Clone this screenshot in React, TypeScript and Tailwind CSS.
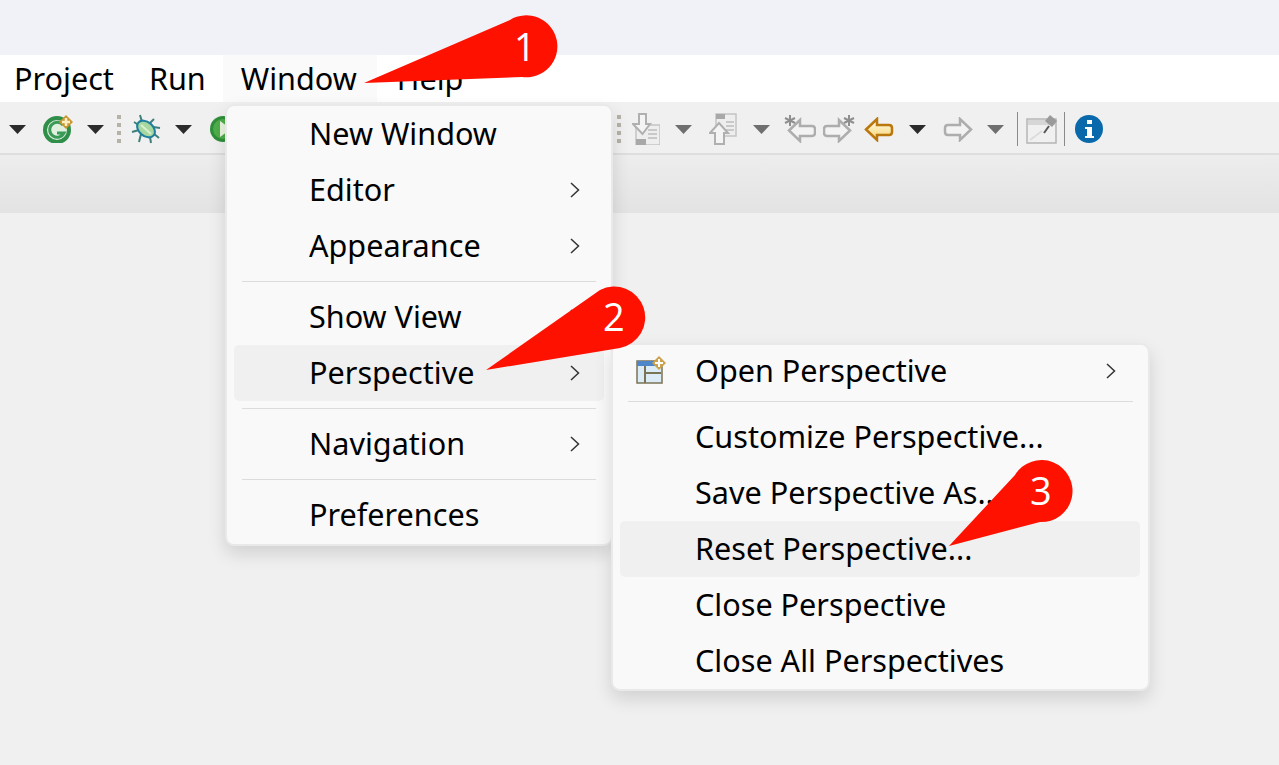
import React from 'react';

const Tri = ({ color = '#2b2b2b', className = '' }: { color?: string; className?: string }) => (
  <svg width="17" height="9" viewBox="0 0 17 9" className={`shrink-0 ${className}`}>
    <path d="M0 0H17L8.5 9Z" fill={color} />
  </svg>
);

const Dots = ({ className = '' }: { className?: string }) => (
  <div className={`flex flex-col gap-[4px] shrink-0 ${className}`}>
    <div className="w-[4px] h-[4px] bg-[#b5b2a8]" />
    <div className="w-[4px] h-[4px] bg-[#b5b2a8]" />
    <div className="w-[4px] h-[4px] bg-[#b5b2a8]" />
    <div className="w-[4px] h-[4px] bg-[#b5b2a8]" />
  </div>
);

const Chevron = () => (
  <svg width="12" height="18" viewBox="0 0 12 18" className="shrink-0">
    <path d="M2 2L9.5 9L2 16" fill="none" stroke="#333" strokeWidth="1.5" />
  </svg>
);

const GoalIcon = () => (
  <svg width="30" height="28" viewBox="0 0 30 28" className="shrink-0">
    <circle cx="14" cy="15" r="12" fill="#dff0df" stroke="#2f8f4a" strokeWidth="4" />
    <path d="M20 10A7.5 7.5 0 1 0 21 18H14" fill="none" stroke="#3a9a58" strokeWidth="3" />
    <path d="M23 0L30 7L23 14L16 7Z" fill="#c9962f" />
    <path d="M23 3V11M19 7H27" stroke="#fbeec5" strokeWidth="2.5" />
  </svg>
);

const BugIcon = () => (
  <svg width="30" height="30" viewBox="0 0 30 30" className="shrink-0">
    <path d="M9 1L11 8M3 8L9 12M1 18L8 16M8 28L10 20M23 5L19 9M29 14L22 13M28 24L22 19M20 29L19 23" stroke="#3f7f78" strokeWidth="2" fill="none" />
    <ellipse cx="15" cy="15" rx="10" ry="7" transform="rotate(40 15 15)" fill="#a9d7a0" stroke="#1f7f9f" strokeWidth="2" />
    <path d="M10 11L20 20" stroke="#d8efd0" strokeWidth="2" />
  </svg>
);

const RunIcon = () => (
  <svg width="28" height="28" viewBox="0 0 28 28" className="shrink-0">
    <circle cx="14" cy="14" r="13" fill="#2f8f3a" />
    <circle cx="14" cy="14" r="10" fill="#4fae4a" />
    <path d="M11 6L22 14L11 22Z" fill="#eaf5df" />
  </svg>
);

const DocDown = () => (
  <svg width="28" height="32" viewBox="0 0 28 32" className="shrink-0">
    <rect x="4" y="12" width="24" height="20" fill="#eeeeee" stroke="#c4c4c4" strokeWidth="1.5" />
    <rect x="4" y="26" width="10" height="6" fill="#a8a8a8" />
    <path d="M16 17H25M16 21H25M16 25H25" stroke="#c9c9c9" strokeWidth="2" />
    <path d="M7 1H14V11H18L10.5 21L1 11H7Z" fill="#f4f4f4" stroke="#b0b0b0" strokeWidth="2" />
  </svg>
);

const DocUp = () => (
  <svg width="28" height="32" viewBox="0 0 28 32" className="shrink-0">
    <rect x="7" y="1" width="20" height="22" fill="#eeeeee" stroke="#c4c4c4" strokeWidth="1.5" />
    <rect x="7" y="1" width="9" height="5" fill="#a8a8a8" />
    <path d="M17 9H25M17 13H25M17 17H25" stroke="#c9c9c9" strokeWidth="2" />
    <path d="M10 10L19 20H15V31H6V20H1Z" fill="#f4f4f4" stroke="#b0b0b0" strokeWidth="2" />
  </svg>
);

const LEFT_ARROW = 'M2 12.5L13 2V8H25Q28 8 28 11V15Q28 18 25 18H13V23Z';

const StarLeft = () => (
  <svg width="32" height="28" viewBox="0 0 32 28" className="shrink-0">
    <g transform="translate(3 3)">
      <path d={LEFT_ARROW} fill="#f3f3f3" stroke="#adadad" strokeWidth="2.5" />
    </g>
    <path d="M6 0V11M1 3L11 8M11 3L1 8" stroke="#8f8f8f" strokeWidth="2" />
  </svg>
);

const StarRight = () => (
  <svg width="32" height="28" viewBox="0 0 32 28" className="shrink-0 -scale-x-100">
    <g transform="translate(3 3)">
      <path d={LEFT_ARROW} fill="#f3f3f3" stroke="#adadad" strokeWidth="2.5" />
    </g>
    <path d="M6 0V11M1 3L11 8M11 3L1 8" stroke="#8f8f8f" strokeWidth="2" />
  </svg>
);

const YellowLeft = () => (
  <svg width="30" height="25" viewBox="0 0 30 25" className="shrink-0">
    <defs>
      <linearGradient id="yl" x1="0" y1="0" x2="0" y2="1">
        <stop offset="0" stopColor="#fffdf0" />
        <stop offset="1" stopColor="#f7d36a" />
      </linearGradient>
    </defs>
    <path d={LEFT_ARROW} fill="url(#yl)" stroke="#b9770e" strokeWidth="2.5" />
  </svg>
);

const GrayRight = () => (
  <svg width="30" height="25" viewBox="0 0 30 25" className="shrink-0 -scale-x-100">
    <path d={LEFT_ARROW} fill="#f3f3f3" stroke="#adadad" strokeWidth="2.5" />
  </svg>
);

const PinWindow = () => (
  <svg width="32" height="30" viewBox="0 0 32 30" className="shrink-0">
    <rect x="1" y="5" width="29" height="24" fill="#f0f0f0" stroke="#b5b5b5" strokeWidth="1.5" />
    <rect x="2" y="6" width="27" height="5" fill="#d6d6d6" />
    <path d="M4 26L16 17" stroke="#dcdcdc" strokeWidth="2" />
    <path d="M18 19L23 12" stroke="#555" strokeWidth="2" />
    <path d="M24 1L31 7L26 13L19 7Z" fill="#9a9a9a" />
  </svg>
);

const InfoIcon = () => (
  <svg width="28" height="28" viewBox="0 0 28 28" className="shrink-0">
    <circle cx="14" cy="14" r="14" fill="#0a69aa" />
    <rect x="12" y="5" width="5" height="4" fill="#fff" />
    <path d="M10 12H17V21H19V23H10V21H12V14H10Z" fill="#fff" />
  </svg>
);

const PerspectiveIcon = () => (
  <svg width="30" height="28" viewBox="0 0 30 28" className="shrink-0">
    <rect x="1" y="5" width="25" height="22" fill="#dcecf7" stroke="#7b7355" strokeWidth="1.5" />
    <rect x="1" y="5" width="20" height="5" fill="#4d86c9" />
    <path d="M9 10V27M9 17H25" stroke="#7b7355" strokeWidth="2" />
    <path d="M23 0L30 7L23 14L16 7Z" fill="#c9a24a" />
    <path d="M23 3V11M19 7H27" stroke="#fff" strokeWidth="2" />
  </svg>
);

const Sep = ({ className = '' }: { className?: string }) => (
  <div className={`h-[1px] bg-[#dcdcdc] ${className}`} />
);

const MainItem = ({ label, arrow, active }: { label: string; arrow?: boolean; active?: boolean }) => (
  <div className={`h-[56px] ml-[7px] mr-[7px] rounded-[5px] flex items-center justify-between pl-[75px] pr-[23px] ${active ? 'bg-[#f0f0f0]' : ''}`}>
    <span>{label}</span>
    {arrow && <Chevron />}
  </div>
);

const SubItem = ({ label, active }: { label: string; active?: boolean }) => (
  <div className={`h-[56px] ml-[7px] mr-[8px] rounded-[5px] flex items-center pl-[75px] ${active ? 'bg-[#f0f0f0]' : ''}`}>
    <span>{label}</span>
  </div>
);

const Callout = ({ d, n, x, y, className }: { d: string; n: string; x: string; y: string; className: string }) => (
  <div className={`absolute ${className}`}>
    <svg width="100%" height="100%" className="absolute inset-0">
      <path d={d} fill="#ff1100" />
    </svg>
    <span className="absolute text-white text-[38px] leading-none font-['Open_Sans',sans-serif]" style={{ left: x, top: y }}>{n}</span>
  </div>
);

export default function App() {
  return (
    <div className="relative isolate w-[1279px] h-[765px] overflow-hidden bg-[#f0f0f0] text-black text-[30.6px] font-['Noto_Sans',sans-serif]">
      <div className="h-[55px] bg-[#f0f2f8]" />

      <div className="h-[47px] bg-white flex items-center">
        <span className="ml-[14px]">Project</span>
        <span className="ml-[35px]">Run</span>
        <div className="ml-[17px] w-[154px] h-full bg-[#fafafa] flex items-center pl-[18px]">
          <span>Window</span>
        </div>
        <span className="ml-[20px]">Help</span>
      </div>

      <div className="h-[53px] pt-[3px] border-b-2 border-[#dedede] flex items-center">
        <Tri className="ml-[9px]" />
        <div className="ml-[17px]"><GoalIcon /></div>
        <Tri className="ml-[14px]" />
        <Dots className="ml-[13px]" />
        <div className="ml-[10px]"><BugIcon /></div>
        <Tri className="ml-[14px]" />
        <div className="ml-[17px]"><RunIcon /></div>
        <Dots className="ml-[380px]" />
        <div className="ml-[11px]"><DocDown /></div>
        <Tri color="#6f6f6f" className="ml-[15px]" />
        <div className="ml-[17px]"><DocUp /></div>
        <Tri color="#6f6f6f" className="ml-[16px]" />
        <div className="ml-[14px]"><StarLeft /></div>
        <div className="ml-[7px]"><StarRight /></div>
        <div className="ml-[9px]"><YellowLeft /></div>
        <Tri className="ml-[15px]" />
        <div className="ml-[17px]"><GrayRight /></div>
        <Tri color="#6f6f6f" className="ml-[14px]" />
        <div className="ml-[13px] w-[1px] h-[34px] bg-[#8a8a8a] shrink-0" />
        <div className="ml-[8px]"><PinWindow /></div>
        <div className="ml-[6px] w-[1px] h-[34px] bg-[#8a8a8a] shrink-0" />
        <div className="ml-[10px]"><InfoIcon /></div>
      </div>

      <div className="h-[58px] bg-gradient-to-b from-[#ededed] to-[#e3e3e3]" />

      {/* window menu */}
      <div className="absolute left-[225px] top-[104px] w-[388px] h-[442px] bg-[#f9f9f9] border-2 border-[#e9e9e9] rounded-[9px] shadow-[0_8px_18px_rgba(0,0,0,0.13)]">
        <MainItem label="New Window" />
        <MainItem label="Editor" arrow />
        <MainItem label="Appearance" arrow />
        <Sep className="mx-[15px] my-[7px]" />
        <MainItem label="Show View" arrow />
        <MainItem label="Perspective" arrow active />
        <Sep className="mx-[15px] my-[7px]" />
        <MainItem label="Navigation" arrow />
        <Sep className="mx-[15px] my-[7px]" />
        <MainItem label="Preferences" />
      </div>

      {/* perspective submenu */}
      <div className="absolute left-[611px] top-[343px] w-[539px] h-[348px] bg-[#f9f9f9] border-2 border-[#e9e9e9] rounded-[9px] shadow-[0_8px_18px_rgba(0,0,0,0.13)]">
        <div className="h-[51px] mx-[6px] flex items-center justify-between pr-[25px]">
          <div className="flex items-center">
            <div className="ml-[17px] mr-[29px]"><PerspectiveIcon /></div>
            <span>Open Perspective</span>
          </div>
          <Chevron />
        </div>
        <Sep className="mx-[15px] mt-[5px] mb-[7px]" />
        <SubItem label="Customize Perspective..." />
        <SubItem label="Save Perspective As..." />
        <SubItem label="Reset Perspective..." active />
        <SubItem label="Close Perspective" />
        <SubItem label="Close All Perspectives" />
      </div>

      <Callout className="left-[360px] top-[14px] w-[200px] h-[72px] z-10" n="1" x="154px" y="13px" d="M4 69L150 6A31 31 0 1 1 162 63Z" />
      <Callout className="left-[482px] top-[284px] w-[166px] h-[90px] z-10" n="2" x="121px" y="13px" d="M4 86L118 6A31 31 0 1 1 138 64Z" />
      <Callout className="left-[945px] top-[458px] w-[130px] h-[92px] z-10" n="3" x="85px" y="13px" d="M4 88L70 17A31 31 0 1 1 95 64Z" />
    </div>
  );
}
